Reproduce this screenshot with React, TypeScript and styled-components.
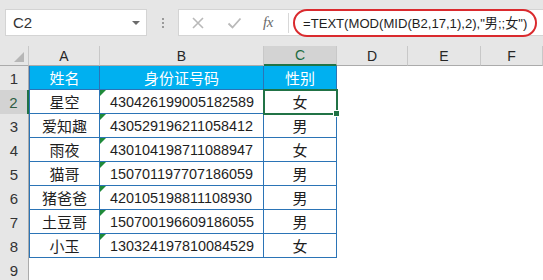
import { Fragment } from "react";
import styled, { createGlobalStyle } from "styled-components";

const GlobalStyle = createGlobalStyle`
  html, body {
    margin: 0;
    padding: 0;
    background: #ffffff;
  }
  body {
    font-family: "Liberation Sans", "Noto Sans CJK SC", sans-serif;
    color: #222;
    overflow: hidden;
  }
`;

const rows = [
  { name: "星空", id: "430426199005182589", sex: "女" },
  { name: "爱知趣", id: "430529196211058412", sex: "男" },
  { name: "雨夜", id: "430104198711088947", sex: "女" },
  { name: "猫哥", id: "150701197707186059", sex: "男" },
  { name: "猪爸爸", id: "420105198811108930", sex: "男" },
  { name: "土豆哥", id: "150700196609186055", sex: "男" },
  { name: "小玉", id: "130324197810084529", sex: "女" },
];

const columns = ["A", "B", "C", "D", "E", "F"];

const Page = styled.div`
  width: 543px;
  height: 280px;
  background: #e6e6e6;
  overflow: hidden;
`;

const Toolbar = styled.div`
  display: flex;
  align-items: flex-start;
  height: 46px;
  padding: 9px 0 0 5px;
  box-sizing: border-box;
`;

const NameBox = styled.div`
  width: 142px;
  height: 27px;
  box-sizing: border-box;
  background: #fff;
  border: 1px solid #d4d4d4;
  display: flex;
  align-items: center;
  justify-content: space-between;
  padding: 0 6px 0 7px;
  font-size: 15px;
  color: #333;
`;

const Caret = styled.span`
  width: 0;
  height: 0;
  border-left: 4px solid transparent;
  border-right: 4px solid transparent;
  border-top: 4px solid #6b6b6b;
`;

const Grip = styled.div`
  width: 31px;
  height: 27px;
  display: flex;
  flex-direction: column;
  align-items: center;
  justify-content: center;
  gap: 2px;

  span {
    width: 2px;
    height: 2px;
    background: #9a9a9a;
  }
`;

const FormulaBar = styled.div`
  flex: 1;
  height: 27px;
  box-sizing: border-box;
  background: #fff;
  border: 1px solid #d4d4d4;
  border-right: none;
  display: flex;
  align-items: center;
`;

const IconButton = styled.div<{ $w: number }>`
  width: ${(p) => p.$w}px;
  height: 100%;
  display: flex;
  align-items: center;
  justify-content: center;
  color: #b9b9b9;
`;

const Fx = styled.span`
  font-family: "Liberation Serif", serif;
  font-style: italic;
  font-size: 15px;
  color: #6a6a6a;
  letter-spacing: -0.5px;
`;

const Divider = styled.div`
  width: 1px;
  height: 20px;
  background: #d8d8d8;
  margin-left: 5px;
`;

const Formula = styled.div`
  flex: 1;
  height: 28px;
  margin: 0 6px 0 4px;
  box-sizing: border-box;
  border: 2px solid #da2a2e;
  border-radius: 14px;
  display: flex;
  align-items: center;
  padding-left: 8px;
  font-size: 13.1px;
  color: #1e1e1e;
  white-space: nowrap;
  overflow: hidden;
`;

const Sheet = styled.div`
  display: grid;
  grid-template-columns: 29px 71px 164px 73px 71px 73px 1fr;
  grid-template-rows: 20px repeat(9, 24px);
  background: #fff;
`;

const Corner = styled.div`
  background: #e6e6e6;
  border-bottom: 1px solid #ababab;
  border-right: 1px solid #c8c8c8;
  position: relative;

  &::after {
    content: "";
    position: absolute;
    right: 4px;
    bottom: 3px;
    border-left: 10px solid transparent;
    border-bottom: 10px solid #b6b6b6;
  }
`;

const ColHead = styled.div<{ $active?: boolean }>`
  box-sizing: border-box;
  background: ${(p) => (p.$active ? "#d3d3d3" : "#e6e6e6")};
  border-bottom: ${(p) => (p.$active ? "2px solid #217346" : "1px solid #ababab")};
  border-right: 1px solid #c8c8c8;
  display: flex;
  align-items: center;
  justify-content: center;
  font-size: 14px;
  color: ${(p) => (p.$active ? "#1d6b40" : "#262626")};
`;

const RowHead = styled.div<{ $active?: boolean }>`
  box-sizing: border-box;
  background: ${(p) => (p.$active ? "#d3d3d3" : "#e6e6e6")};
  border-right: ${(p) => (p.$active ? "2px solid #217346" : "1px solid #ababab")};
  display: flex;
  align-items: center;
  justify-content: center;
  font-size: 15px;
  color: ${(p) => (p.$active ? "#2f5d43" : "#333")};
`;

const Empty = styled.div`
  background: #fff;
`;

const Cell = styled.div<{
  $head?: boolean;
  $first?: boolean;
  $align?: "left" | "center";
  $cjk?: boolean;
  $flag?: boolean;
  $selected?: boolean;
}>`
  position: relative;
  box-sizing: border-box;
  display: flex;
  align-items: center;
  justify-content: ${(p) => (p.$align === "left" ? "flex-start" : "center")};
  padding-left: ${(p) => (p.$align === "left" ? "10px" : "0")};
  background: ${(p) => (p.$head ? "#00b0f0" : "#fff")};
  color: ${(p) => (p.$head ? "#fff" : "#1e1e1e")};
  font-size: ${(p) => (p.$cjk ? "15px" : "14.4px")};
  white-space: nowrap;
  border-right: 1px solid #2b74b6;
  border-bottom: 1px solid #2b74b6;
  border-left: ${(p) => (p.$first ? "1px solid #2b74b6" : "none")};
  outline: ${(p) => (p.$selected ? "2px solid #217346" : "none")};
  outline-offset: -1px;
  z-index: ${(p) => (p.$selected ? 2 : 1)};

  &::before {
    content: "";
    display: ${(p) => (p.$flag ? "block" : "none")};
    position: absolute;
    top: 0;
    left: 0;
    border-top: 6px solid #1f8a3a;
    border-right: 6px solid transparent;
  }

  &::after {
    content: "";
    display: ${(p) => (p.$selected ? "block" : "none")};
    position: absolute;
    right: -4px;
    bottom: -4px;
    width: 5px;
    height: 5px;
    background: #217346;
    border: 1px solid #fff;
  }
`;

const XIcon = () => (
  <svg width="14" height="14" viewBox="0 0 14 14">
    <path d="M2 2 L12 12 M12 2 L2 12" stroke="currentColor" strokeWidth="1.6" fill="none" />
  </svg>
);

const CheckIcon = () => (
  <svg width="15" height="14" viewBox="0 0 15 14">
    <path d="M1.5 7.5 L5.5 11.5 L13.5 2.5" stroke="currentColor" strokeWidth="1.8" fill="none" />
  </svg>
);

const blanks = (n: number, row: number) =>
  Array.from({ length: n }, (_, i) => <Empty key={`e-${row}-${i}`} />);

export default function App() {
  return (
    <Page>
      <GlobalStyle />
      <Toolbar>
        <NameBox>
          C2
          <Caret />
        </NameBox>
        <Grip>
          <span />
          <span />
          <span />
        </Grip>
        <FormulaBar>
          <IconButton $w={37}>
            <XIcon />
          </IconButton>
          <IconButton $w={37}>
            <CheckIcon />
          </IconButton>
          <IconButton $w={30}>
            <Fx>fx</Fx>
          </IconButton>
          <Divider />
          <Formula>=TEXT(MOD(MID(B2,17,1),2),"男;;女")</Formula>
        </FormulaBar>
      </Toolbar>

      <Sheet>
        <Corner />
        {columns.map((c) => (
          <ColHead key={c} $active={c === "C"}>
            {c}
          </ColHead>
        ))}

        <RowHead>1</RowHead>
        <Cell $head $first $cjk>姓名</Cell>
        <Cell $head $cjk>身份证号码</Cell>
        <Cell $head $cjk>性别</Cell>
        {blanks(3, 1)}

        {rows.map((r, i) => (
          <Fragment key={r.id}>
            <RowHead $active={i === 0}>{i + 2}</RowHead>
            <Cell $first $cjk>
              {r.name}
            </Cell>
            <Cell $align="left" $flag>
              {r.id}
            </Cell>
            <Cell $cjk $selected={i === 0}>
              {r.sex}
            </Cell>
            {blanks(3, i + 2)}
          </Fragment>
        ))}

        <RowHead>9</RowHead>
        {blanks(6, 9)}
      </Sheet>
    </Page>
  );
}
